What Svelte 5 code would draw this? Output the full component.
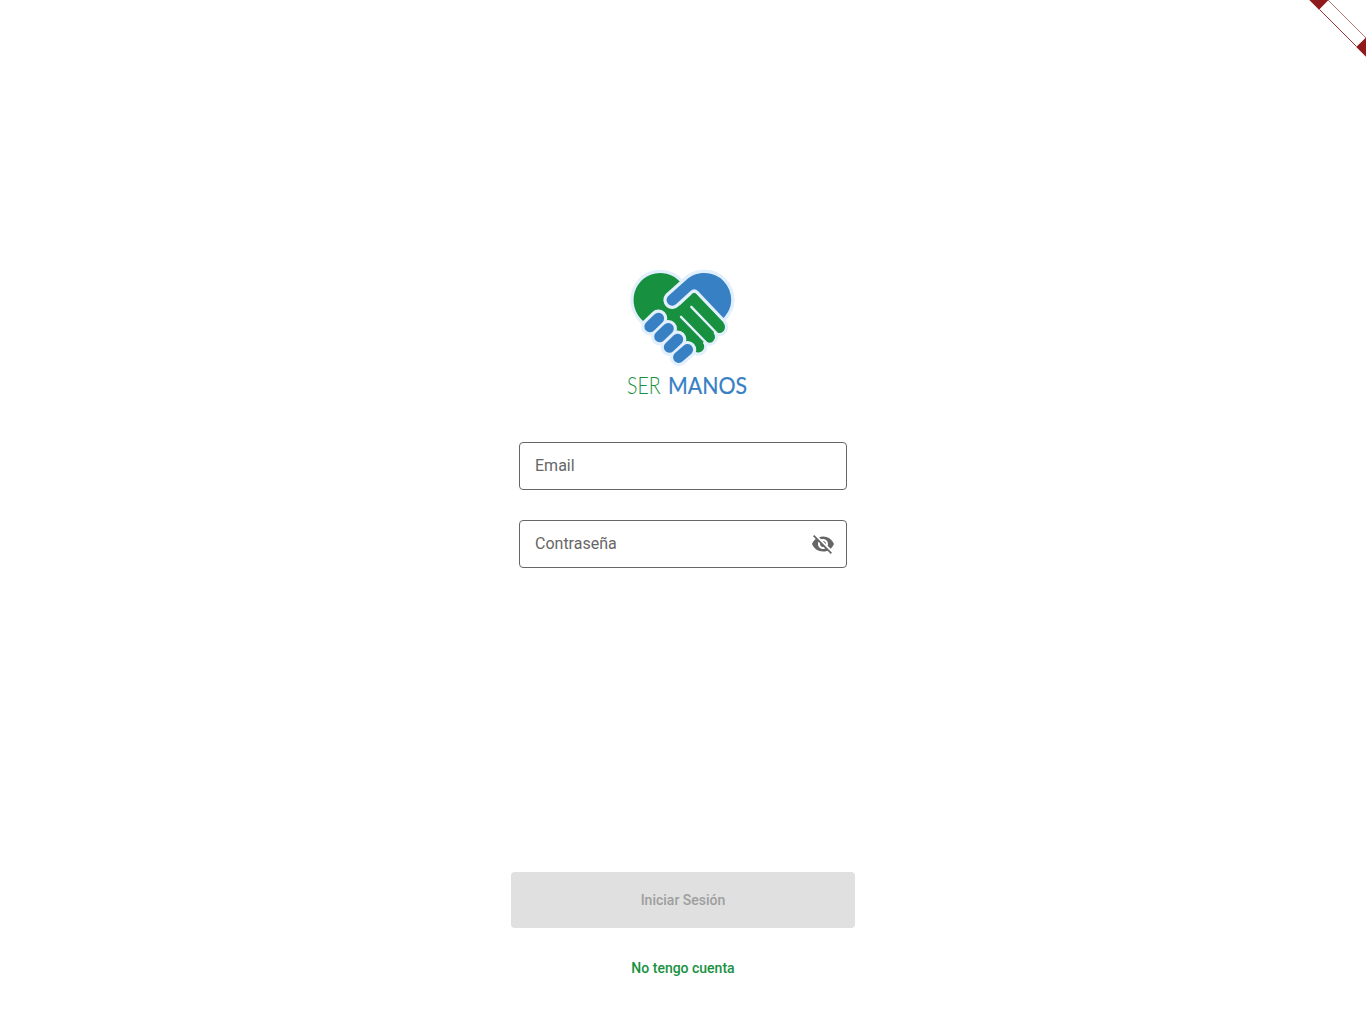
<script>
  let email = $state('');
  let password = $state('');
  let visible = $state(false);

  const blueFingers = [
    'M650 326.6L658.5 318.4',
    'M659.8 336.6L668.2 328.7',
    'M669.4 347.2L677.6 339.4',
    'M678.7 357.3L687.5 349.7'
  ];
  const leftHand =
    'M680.2 282A26.6 26.6 0 0 0 633.6 300C633.6 308.5 637 315 643 321L656 315L672 330L688 348L694 350.5A5.6 5.6 0 0 0 702.8 342.8L705 340.8A5.6 5.6 0 0 0 713.5 333L714.7 331A5.7 5.7 0 0 0 723.5 323L696.2 294.1Q694.2 292 692 294L680 305L667 300Z';
  const rightHand =
    'M723.5 318C728.5 312.5 731.2 307 731.2 300A26.8 26.8 0 0 0 704.5 273C697 273 691 275.5 686.5 279.7L668 296.2A5.3 5.3 0 0 0 676.5 303.8L690.2 291.2Q694.2 287.3 698.2 291.2Z';
</script>

<main>
  <svg class="ribbon" width="60" height="60" viewBox="0 0 60 60" aria-hidden="true">
    <path class="edge" d="M13.5 9.5L50.5 46.5" />
    <path class="edge faint" d="M22 0L60 38" />
    <path class="end" d="M3.3 0H22.5L13 9.8ZM60 37.5V56.7L50.2 47Z" />
  </svg>

  <svg class="logo" width="130" height="140" viewBox="620 260 130 140" role="img" aria-label="Ser Manos">
    <g class="halo">
      <path d={leftHand} />
      <path d={rightHand} />
    </g>
    <path class="green" d={leftHand} />
    <path class="gap" d="M691.3 306.8L716.5 333M681 316.8L706.5 343" />
    <path class="halo" d={rightHand} />
    <path class="green" d="M691.6 294.4Q694.2 292 696.2 294.1L723.5 322.5L719 327L691 300Z" />
    <path class="blue" d={rightHand} />
    {#each blueFingers as d}
      <path class="finger-halo" {d} />
    {/each}
    {#each blueFingers as d}
      <path class="finger" {d} />
    {/each}
    <text class="ser" x="627" y="394" textLength="33.5" lengthAdjust="spacingAndGlyphs">SER</text>
    <text class="manos" x="668" y="394" textLength="79" lengthAdjust="spacingAndGlyphs">MANOS</text>
  </svg>

  <form>
    <div class="field">
      <input type="email" placeholder="Email" aria-label="Email" bind:value={email} />
    </div>
    <div class="field">
      <input type={visible ? 'text' : 'password'} placeholder="Contraseña" aria-label="Contraseña" bind:value={password} />
      <button class="toggle" type="button" aria-label="Mostrar" onclick={() => (visible = !visible)}>
        <svg width="24" height="24" viewBox="0 0 24 24">
          <path d="M12 7c2.76 0 5 2.24 5 5 0 .65-.13 1.26-.36 1.83l2.92 2.92c1.51-1.26 2.7-2.89 3.43-4.75-1.73-4.39-6-7.5-11-7.5-1.4 0-2.74.25-3.98.7l2.16 2.16C10.74 7.13 11.35 7 12 7zM2 4.27l2.28 2.28.46.46C3.08 8.3 1.78 10.02 1 12c1.73 4.39 6 7.5 11 7.5 1.55 0 3.03-.3 4.38-.84l.42.42L19.73 22 21 20.73 3.27 3 2 4.27zM7.53 9.8l1.55 1.55c-.05.21-.08.43-.08.65 0 1.66 1.34 3 3 3 .22 0 .44-.03.65-.08l1.55 1.55c-.67.33-1.41.53-2.2.53-2.76 0-5-2.24-5-5 0-.79.2-1.53.53-2.2zm4.31-.78l3.15 3.15.02-.16c0-1.66-1.34-3-3-3l-.17.01z" />
        </svg>
      </button>
    </div>
  </form>

  <div class="actions">
    <button class="primary" disabled={!email || !password}>Iniciar Sesión</button>
    <button class="link">No tengo cuenta</button>
  </div>
</main>

<style>
  :global(body) {
    background: #fff;
  }
  main {
    position: relative;
    box-sizing: border-box;
    height: 1024px;
    padding: 260px 0 32px;
    display: flex;
    flex-direction: column;
    align-items: center;
    overflow: hidden;
    font-family: Roboto, 'Liberation Sans', sans-serif;
  }
  .ribbon {
    position: absolute;
    top: 0;
    right: 0;
  }
  .edge {
    fill: none;
    stroke: #8f1a1c;
    stroke-width: 0.9;
  }
  .faint {
    stroke-width: 0.6;
  }
  .end {
    fill: #8f1a1c;
  }
  .logo {
    display: block;
    flex: none;
    margin-left: 4px;
    overflow: visible;
  }
  .green {
    fill: #17913f;
  }
  .blue {
    fill: #3780c4;
  }
  .halo {
    fill: #e2effc;
    stroke: #e2effc;
    stroke-width: 6.4;
    stroke-linejoin: round;
  }
  .gap,
  .finger,
  .finger-halo {
    fill: none;
    stroke: #e2effc;
    stroke-width: 2.4;
    stroke-linecap: round;
  }
  .finger-halo {
    stroke-width: 17.6;
  }
  .finger {
    stroke: #3780c4;
    stroke-width: 11.2;
  }
  .ser,
  .manos {
    font-family: Lato, sans-serif;
    font-size: 23.6px;
  }
  .ser {
    fill: #17913f;
    font-weight: 300;
  }
  .manos {
    fill: #3780c4;
    font-weight: 400;
    stroke: #3780c4;
    stroke-width: 0.2;
  }
  form {
    display: flex;
    flex-direction: column;
    gap: 30px;
    margin-top: 42px;
  }
  .field {
    box-sizing: border-box;
    display: flex;
    align-items: center;
    width: 328px;
    height: 48px;
    padding: 0 11px 0 15px;
    border: 1px solid #666;
    border-radius: 4px;
  }
  input {
    flex: 1;
    min-width: 0;
    height: 24px;
    padding: 0;
    border: 0;
    outline: 0;
    background: none;
    color: #222;
    font: 400 16px/24px Roboto, sans-serif;
  }
  input::placeholder {
    color: #666;
    opacity: 1;
  }
  button {
    border: 0;
    background: none;
    font: 500 14px/20px Roboto, sans-serif;
  }
  .toggle {
    padding: 0;
    width: 24px;
    height: 24px;
  }
  .toggle svg {
    display: block;
    fill: #666;
  }
  .actions {
    display: flex;
    flex-direction: column;
    gap: 16px;
    width: 344px;
    margin-top: auto;
  }
  .primary {
    height: 56px;
    border-radius: 4px;
    background: #e0e0e0;
    color: #9e9e9e;
  }
  .link {
    height: 48px;
    color: #17913f;
  }
</style>
